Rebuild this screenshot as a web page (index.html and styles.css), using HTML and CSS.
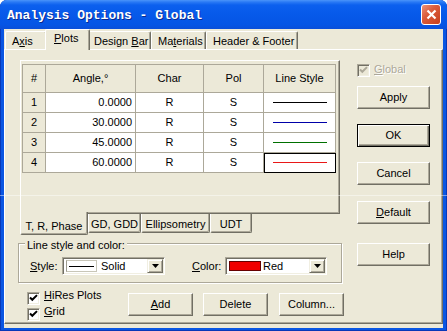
FILE: index.html
```html
<!DOCTYPE html>
<html>
<head>
<meta charset="utf-8">
<title>Analysis Options - Global</title>
<link rel="stylesheet" href="styles.css">
</head>
<body>
<div class="window">
  <div class="titlebar">
    <span class="title">Analysis Options - Global</span>
    <span class="close"><svg width="11" height="11" viewBox="0 0 11 11"><path d="M1.5 1.5L9.5 9.5M9.5 1.5L1.5 9.5" stroke="#fff" stroke-width="2.2" fill="none"/></svg></span>
  </div>
  <div class="client">
    <div class="tabs">
      <div class="tab t-axis">A<u>x</u>is</div>
      <div class="tab active t-plots"><u>P</u>lots</div>
      <div class="tab t-design">Design <u>B</u>ar</div>
      <div class="tab t-mat">Ma<u>t</u>erials</div>
      <div class="tab t-hf">Header &amp; Footer</div>
    </div>
    <div class="page">
      <div class="left">
        <div class="subctl">
          <div class="subpage">
            <table class="grid">
              <colgroup>
                <col class="c1"><col class="c2"><col class="c3"><col class="c4"><col class="c5">
              </colgroup>
              <thead>
                <tr><th>#</th><th>Angle,°</th><th>Char</th><th>Pol</th><th>Line Style</th></tr>
              </thead>
              <tbody>
                <tr><td class="num">1</td><td class="ang">0.0000</td><td>R</td><td>S</td><td><div class="ln ln-black"></div></td></tr>
                <tr><td class="num">2</td><td class="ang">30.0000</td><td>R</td><td>S</td><td><div class="ln ln-blue"></div></td></tr>
                <tr><td class="num">3</td><td class="ang">45.0000</td><td>R</td><td>S</td><td><div class="ln ln-green"></div></td></tr>
                <tr><td class="num">4</td><td class="ang">60.0000</td><td>R</td><td>S</td><td class="sel"><div class="ln ln-red"></div></td></tr>
              </tbody>
            </table>
          </div>
          <div class="subtabs">
            <div class="stab active w-trp">T, R, Phase</div>
            <div class="stab w-gd">GD, GDD</div>
            <div class="stab w-ell">Ellipsometry</div>
            <div class="stab w-udt">UDT</div>
          </div>
        </div>
        <div class="group">
          <div class="legend">Line style and color:</div>
          <div class="group-row">
            <span class="lbl lbl-style"><u>S</u>tyle:</span>
            <div class="combo combo-style">
              <span class="sample"><i></i></span><span class="ctext">Solid</span>
              <span class="drop"><svg width="7" height="4" viewBox="0 0 7 4"><path d="M0 0H7L3.5 4Z" fill="#000"/></svg></span>
            </div>
            <span class="lbl lbl-color"><u>C</u>olor:</span>
            <div class="combo combo-color">
              <span class="swatch"></span><span class="ctext">Red</span>
              <span class="drop"><svg width="7" height="4" viewBox="0 0 7 4"><path d="M0 0H7L3.5 4Z" fill="#000"/></svg></span>
            </div>
          </div>
        </div>
        <div class="bottom">
          <div class="checks">
            <div class="chk"><span class="box"><svg width="11" height="11" viewBox="0 0 11 11"><path d="M2 4.5L4.3 6.8L9 2.1" stroke="#000" stroke-width="2" fill="none"/></svg></span><span class="t"><u>H</u>iRes Plots</span></div>
            <div class="chk"><span class="box"><svg width="11" height="11" viewBox="0 0 11 11"><path d="M2 4.5L4.3 6.8L9 2.1" stroke="#000" stroke-width="2" fill="none"/></svg></span><span class="t"><u>G</u>rid</span></div>
          </div>
          <div class="btn b-add"><span><u>A</u>dd</span></div>
          <div class="btn b-del">Delete</div>
          <div class="btn b-col">Column...</div>
        </div>
      </div>
      <div class="side">
        <div class="chk global"><span class="box dis"><svg width="11" height="11" viewBox="0 0 11 11"><path d="M2 4.5L4.3 6.8L9 2.1" stroke="#ACA899" stroke-width="2" fill="none"/></svg></span><span class="t"><u>G</u>lobal</span></div>
        <div class="btn s-apply">Apply</div>
        <div class="btn s-ok default">OK</div>
        <div class="btn s-cancel">Cancel</div>
        <div class="btn s-default"><span><u>D</u>efault</span></div>
        <div class="btn s-help">Help</div>
      </div>
    </div>
  </div>
  <div class="scanline"></div>
</div>
</body>
</html>
```

FILE: styles.css
```css
* { box-sizing: border-box; }
html, body { margin: 0; padding: 0; background: #fff; }
body { font-family: "Liberation Sans", Arial, sans-serif; font-size: 11px; line-height: 13px; color: #000; }
u { text-decoration: underline; text-underline-offset: 1px; }

.window {
  position: relative;
  width: 447px; height: 331px;
  display: flex; flex-direction: column;
  background: #0A56E2;
  border-radius: 7px 7px 0 0;
  overflow: hidden;
  box-shadow: inset 1px 0 #0838B8, inset -1px 0 #0838B8, inset 0 -1px #0838B8;
}
.scanline {
  position: absolute; left: 0; right: 0; top: 195px; height: 1px;
  background: rgba(255, 255, 255, 0.45);
}
.titlebar {
  height: 29px; flex: none;
  display: flex; align-items: center;
  padding: 1px 6px 0 7px;
  background: linear-gradient(#4A94FA 0, #2A7AF5 2px, #0C60EE 5px, #075AEA 45%, #0555E5 85%, #0A4FD9 100%);
}
.title {
  flex: 1;
  font-family: "Liberation Mono", "Courier New", monospace;
  font-weight: bold; font-size: 13px;
  color: #fff;
  text-shadow: 1px 1px 0 #0A2A90;
}
.close {
  width: 20px; height: 21px; margin-top: -2px;
  border: 1px solid #fff; border-radius: 3px;
  background: linear-gradient(135deg, #EC9278 0%, #DA5C3C 40%, #C73E1C 100%);
  display: flex; align-items: center; justify-content: center;
}

.client {
  flex: 1;
  margin: 0 4px 5px 4px;
  padding-bottom: 4px;
  background: #ECE9D8;
  display: flex; flex-direction: column;
}

/* top tabs */
.tabs { height: 20px; flex: none; display: flex; align-items: flex-end; padding-left: 1px; }
.tab {
  height: 18px; padding: 3px 0 0 6px;
  border-top: 1px solid #fff; border-left: 1px solid #fff; border-right: 1px solid #716F64;
  border-radius: 2px 2px 0 0;
  box-shadow: inset -1px 0 #ACA899;
  background: #ECE9D8;
  white-space: nowrap;
}
.tab.active {
  height: 21px; margin: 0 -2px -1px -2px; padding: 2px 0 0 8px;
  position: relative; z-index: 1;
}
.t-axis { width: 42px; }
.t-plots { width: 45px; }
.t-design { width: 63px; padding-left: 5px; }
.t-mat { width: 55px; padding-left: 6px; }
.t-hf { width: 92px; }

.page {
  flex: 1;
  display: flex;
  border: 1px solid; border-color: #fff #716F64 #716F64 #fff;
  box-shadow: inset -1px -1px #ACA899;
  padding: 10px 0 0 13px;
}
.left { width: 326px; flex: none; }

/* inner tab control */
.subctl { margin-left: 2px; width: 320px; }
.subpage {
  height: 154px;
  border: 1px solid; border-color: #fff #716F64 #716F64 #fff;
  box-shadow: inset -1px -1px #ACA899;
  padding: 3px 0 0 1px;
}
.grid {
  border-collapse: separate; border-spacing: 0;
  table-layout: fixed; width: 314px;
  border-top: 1px solid #ACA899; border-left: 1px solid #ACA899;
}
.c1 { width: 23px; } .c2 { width: 90px; } .c3 { width: 68px; } .c4 { width: 60px; } .c5 { width: 72px; }
.grid th, .grid td {
  border-right: 1px solid #ACA899; border-bottom: 1px solid #ACA899;
  padding: 0; text-align: center; font-weight: normal;
  background: #fff;
}
.grid th { height: 28px; background: #ECE9D8; }
.grid td { height: 20px; }
.grid td.num { background: #ECE9D8; }
.grid td.ang { text-align: right; padding-right: 3px; }
.grid td.sel { border-right-color: #000; border-bottom-color: #000; box-shadow: inset 1px 1px 0 #000; }
.ln { width: 54px; height: 1px; margin: 0 auto; }
.ln-black { background: #000; }
.ln-blue { background: #0000A8; }
.ln-green { background: #007000; }
.ln-red { background: #E81818; }

.subtabs { display: flex; align-items: flex-start; height: 21px; }
.stab {
  height: 19px; padding-top: 4px; text-align: center;
  border-style: solid; border-width: 0 1px 1px 1px;
  border-color: #fff #716F64 #716F64 #fff;
  box-shadow: inset -1px -1px #ACA899;
  border-radius: 0 0 2px 2px;
  background: #ECE9D8;
  white-space: nowrap;
}
.stab.active { margin-top: -2px; height: 23px; padding-top: 8px; position: relative; z-index: 1; }
.w-trp { width: 68px; } .w-gd { width: 53px; } .w-ell { width: 69px; } .w-udt { width: 42px; }

/* group box */
.group {
  margin-top: 8px; width: 324px; height: 40px;
  border: 1px solid #ACA899;
  box-shadow: 1px 1px 0 #fff, inset 1px 1px 0 #fff;
}
.legend {
  width: max-content; margin: -5px 0 0 6px; padding: 0 2px;
  background: #ECE9D8;
}
.group-row { display: flex; align-items: center; height: 18px; margin-top: 5px; padding-left: 11px; }
.lbl { white-space: nowrap; }
.lbl-style { width: 32px; }
.lbl-color { width: 33px; margin-left: 27px; }
.combo {
  height: 18px; padding: 1px;
  display: flex; align-items: center;
  background: #fff;
  border: 1px solid; border-color: #ACA899 #fff #fff #ACA899;
  box-shadow: inset 1px 1px #716F64, inset -1px -1px #F1EFE2;
}
.combo-style { width: 103px; }
.combo-color { width: 102px; }
.sample {
  width: 31px; height: 12px; margin-left: 2px;
  border: 1px solid #C8C6B8; border-left-color: #9D9B8E;
  display: flex; align-items: center; justify-content: center;
}
.sample i { display: block; width: 25px; height: 1px; background: #000; }
.ctext { margin-left: 4px; }
.swatch { width: 32px; height: 10px; margin-left: 2px; background: #F00000; border: 1px solid #600; }
.combo-color .ctext { margin-left: 2px; }
.drop {
  margin-left: auto; width: 16px; height: 14px;
  display: flex; align-items: center; justify-content: center;
  background: #ECE9D8;
  border: 1px solid; border-color: #F1EFE2 #716F64 #716F64 #F1EFE2;
  box-shadow: inset 1px 1px #fff, inset -1px -1px #ACA899;
}

/* bottom row */
.bottom { display: flex; margin-top: 8px; }
.checks { width: 110px; padding-left: 9px; }
.chk { display: flex; align-items: flex-start; height: 16px; white-space: nowrap; }
.box {
  width: 13px; height: 13px; margin-top: 1px; flex: none;
  background: #fff;
  border: 1px solid; border-color: #ACA899 #fff #fff #ACA899;
  box-shadow: inset 1px 1px #716F64, inset -1px -1px #F1EFE2;
  display: flex; align-items: center; justify-content: center;
}
.box.dis { background: #ECE9D8; }
.chk .t { margin: -2px 0 0 4px; }

.btn {
  height: 23px;
  display: flex; align-items: center; justify-content: center;
  background: #ECE9D8;
  border: 1px solid; border-color: #fff #716F64 #716F64 #fff;
  box-shadow: inset -1px -1px #ACA899;
  white-space: nowrap;
}
.btn.default {
  border-color: #000;
  box-shadow: inset 1px 1px #fff, inset -1px -1px #716F64, inset -2px -2px #ACA899;
}
.b-add { width: 65px; margin-top: 2px; }
.b-del { width: 65px; margin-top: 2px; margin-left: 10px; }
.b-col { width: 65px; margin-top: 2px; margin-left: 11px; }

/* right column */
.side { width: 73px; margin-left: 13px; display: flex; flex-direction: column; }
.global { margin-top: 3px; }
.global .t { color: #ACA899; text-shadow: 1px 1px 0 #fff; margin-top: 0; }
.s-apply { margin-top: 7px; }
.s-ok { margin-top: 15px; }
.s-cancel { margin-top: 15px; }
.s-default { margin-top: 16px; }
.s-help { margin-top: 19px; }
```
